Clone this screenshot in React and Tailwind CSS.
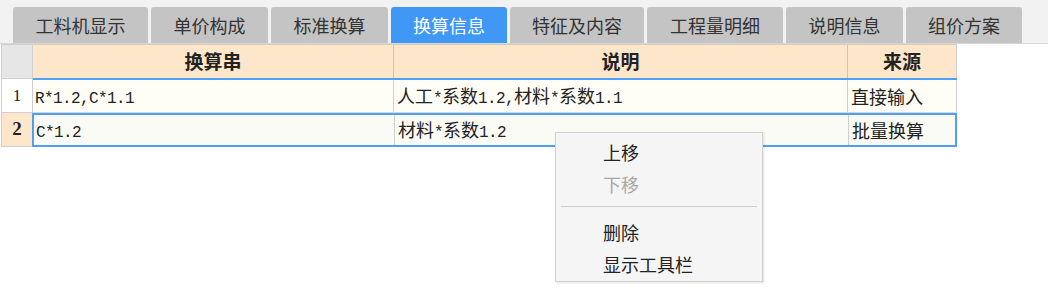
import React from "react";

const tabs = [
  { label: "工料机显示", w: "w-[135px]" },
  { label: "单价构成", w: "w-[117px]" },
  { label: "标准换算", w: "w-[117px]" },
  { label: "换算信息", w: "w-[116px]", active: true },
  { label: "特征及内容", w: "w-[134px]" },
  { label: "工程量明细", w: "w-[136px]" },
  { label: "说明信息", w: "w-[117px]" },
  { label: "组价方案", w: "w-[116px]" },
];

const rows = [
  { no: "1", expr: "R*1.2,C*1.1", desc: "人工*系数1.2,材料*系数1.1", src: "直接输入" },
  { no: "2", expr: "C*1.2", desc: "材料*系数1.2", src: "批量换算", selected: true },
];

// ASCII runs get a half-width mono face, like SimSun in the original
const Mixed = ({ text }) => (
  <span>
    {text.split(/([\x00-\x7f]+)/).map((part, i) =>
      /^[\x00-\x7f]+$/.test(part) ? (
        <span key={i} className="font-['Liberation_Mono',monospace] text-[16px] tracking-[-0.6px]">
          {part}
        </span>
      ) : (
        <span key={i}>{part}</span>
      )
    )}
  </span>
);

const cols = "grid grid-cols-[361px_454px_109px]";

export default function App() {
  return (
    <div className="relative w-[1048px] h-[308px] overflow-hidden bg-white font-['Noto_Sans_CJK_SC',sans-serif] text-[#222]">
      {/* Tab strip */}
      <div className="h-[44px] bg-[#f2f2f2] border-b border-[#d6d6d6] flex items-end pl-[13px] gap-[3px]">
        {tabs.map((t) => (
          <div
            key={t.label}
            className={`${t.w} h-[36px] rounded-t-[3px] flex items-center justify-center text-[18px] ${
              t.active ? "bg-[#3f97f6] text-white" : "bg-[#c4c4c4] text-[#333]"
            }`}
          >
            {t.label}
          </div>
        ))}
      </div>

      {/* Grid */}
      <div className="ml-[1px] w-[956px]">
        {/* Header */}
        <div className="flex h-[35px]">
          <div className="w-[32px] bg-[#e6e6e6] border border-[#cfcfcf]" />
          <div className={`${cols} bg-[#fde6c9] border-y border-[#d9cbb8] text-[19px] font-bold`}>
            <div className="flex items-center justify-center border-r border-[#d2c4b0]">换算串</div>
            <div className="flex items-center justify-center border-r border-[#d2c4b0]">说明</div>
            <div className="flex items-center justify-center border-r border-[#cfcfcf]">来源</div>
          </div>
        </div>

        {rows.map((r) => (
          <div key={r.no} className="flex h-[34px]">
            <div
              className={`w-[32px] flex items-center justify-center border-x border-b border-[#cfcfcf] font-['Liberation_Serif',serif] ${
                r.selected ? "bg-[#fde6c9] font-bold text-[19px]" : "bg-white text-[17px]"
              }`}
            >
              {r.no}
            </div>
            <div
              className={`${cols} text-[18px] ${
                r.selected
                  ? "bg-[#fbfbf5] border-2 border-[#4d9ff8] -ml-[1px] w-[925px]"
                  : "bg-[#fffef6] border-t-2 border-[#4d9ff8] border-b border-b-[#d8d8d8] -mt-[1px] h-[35px]"
              }`}
            >
              <div className="flex items-center pl-[2px] border-r border-[#cfcfcf] whitespace-nowrap">
                <Mixed text={r.expr} />
              </div>
              <div className="flex items-center pl-[3px] border-r border-[#cfcfcf] whitespace-nowrap">
                <Mixed text={r.desc} />
              </div>
              <div className={`flex items-center pl-[3px] whitespace-nowrap ${r.selected ? "" : "border-r border-[#cfcfcf]"}`}>
                {r.src}
              </div>
            </div>
          </div>
        ))}
      </div>

      {/* Context menu */}
      <div className="absolute left-[555px] top-[132px] w-[208px] h-[150px] bg-[#f5f5f5] border border-[#d2d2d2] shadow-[1px_1px_2px_rgba(0,0,0,0.12)] pt-[3px] text-[18px]">
        <div className="h-[32px] flex items-center pl-[47px] text-[#222]">上移</div>
        <div className="h-[32px] flex items-center pl-[47px] text-[#a8a8a8]">下移</div>
        <div className="h-[16px] pt-[6px] px-[5px]">
          <div className="h-px bg-[#d0d0d0]" />
        </div>
        <div className="h-[32px] flex items-center pl-[47px] text-[#222]">删除</div>
        <div className="h-[32px] flex items-center pl-[47px] text-[#222]">显示工具栏</div>
      </div>
    </div>
  );
}
